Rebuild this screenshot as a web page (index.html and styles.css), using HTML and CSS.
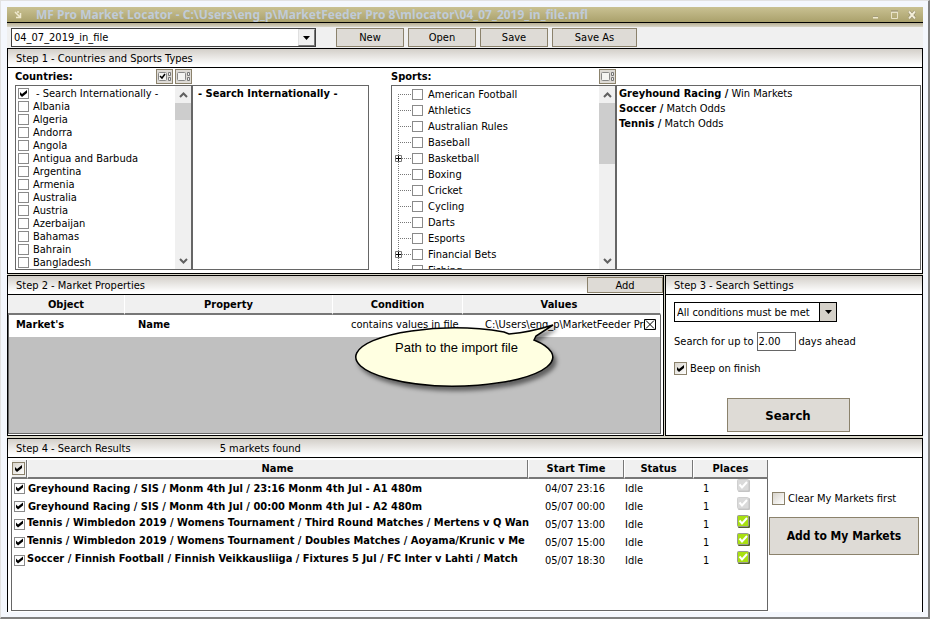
FILE: index.html
```html
<!DOCTYPE html>
<html lang="en">
<head>
    <meta charset="UTF-8">
    <meta name="viewport" content="width=device-width, initial-scale=1.0">
    <title>MF Pro Market Locator</title>
    <link rel="stylesheet" href="styles.css">
</head>
<body>

<!-- shared icons -->
<svg class="sprites" aria-hidden="true">
    <symbol id="up" viewBox="0 0 9 6"><path d="M1 5L4.500 1.500L8 5" fill="none" stroke="#606060" stroke-width="2"/></symbol>
    <symbol id="down" viewBox="0 0 9 6"><path d="M1 1L4.500 4.500L8 1" fill="none" stroke="#606060" stroke-width="2"/></symbol>
    <symbol id="drop" viewBox="0 0 7 4"><path d="M0 0H7L3.500 4Z" fill="#000"/></symbol>
    <symbol id="plus" viewBox="0 0 7 7"><path d="M.5 .5H6.500V6.500H.5Z" fill="#fff" stroke="#777"/><path d="M1 3.500H6M3.500 1V6" stroke="#000"/></symbol>
    <symbol id="none" viewBox="0 0 15 13">
        <rect x="1.500" y="2.500" width="8" height="8" rx="1" fill="#f4f4f2" stroke="#888"/>
        <path d="M11.500 2.500h2v3h-2zM11.500 7.500h2v3h-2z" fill="#eee" stroke="#777"/>
    </symbol>
    <symbol id="all" viewBox="0 0 15 13">
        <rect x="1.500" y="2.500" width="8" height="8" rx="1" fill="#f4f4f2" stroke="#888"/>
        <path d="M3 6l2 2 3-4" fill="none" stroke="#000" stroke-width="1.500"/>
        <path d="M11.500 2.500h2v3h-2zM11.500 7.500h2v3h-2z" fill="#eee" stroke="#777"/>
    </symbol>
    <symbol id="place" viewBox="0 0 13 13">
        <rect x="1" y="1" width="12" height="12" rx="1" fill="#53612c"/>
        <rect x=".5" y=".5" width="11" height="11" rx="1" fill="#a8e010" stroke="#9a9a92"/>
        <path d="M2.500 5.500L5 8.500L10 3" fill="none" stroke="#fff" stroke-width="2"/>
    </symbol>
    <symbol id="noplace" viewBox="0 0 13 13">
        <rect x="1" y="1" width="12" height="12" rx="1" fill="#c4c4c4"/>
        <rect x=".5" y=".5" width="11" height="11" rx="1" fill="#dadada" stroke="#d0d0d0"/>
        <path d="M2.500 5.500L5 8.500L10 3" fill="none" stroke="#fff" stroke-width="2"/>
    </symbol>
</svg>

<div class="window">
    <div class="titlebar">
        <svg class="app-icon" width="8" height="8" viewBox="0 0 8 8"><path d="M1 1L6 6M2 6.500H6.500V2M3 1H5" fill="none" stroke="#efe9cf" stroke-width="1.500"/></svg>
        <span class="title">MF Pro Market Locator - C:\Users\eng_p\MarketFeeder Pro 8\mlocator\04_07_2019_in_file.mfl</span>
        <svg class="win-icons" width="44" height="10" viewBox="0 0 44 10">
            <path d="M1 7.500H6" stroke="#f0ead0" stroke-width="2"/><path d="M1 6.500H6" stroke="#a39c7c"/>
            <path d="M19.500 1.500H25.500V8.500H19.500Z" fill="none" stroke="#e9e3c8"/><path d="M19 1H26" stroke="#8f876a" stroke-width="1"/><path d="M19 2.500H26" stroke="#e9e3c8"/>
            <path d="M37 1.500L43 8.500M43 1.500L37 8.500" stroke="#857d62" stroke-width="3"/><path d="M37 1.500L43 8.500M43 1.500L37 8.500" stroke="#f3eed8" stroke-width="2"/>
        </svg>
    </div>

    <div class="toolbar">
        <div class="combo combo-file">
            <select aria-label="Search file"><option>04_07_2019_in_file</option></select>
            <span class="combo-btn"><svg width="7" height="4"><use href="#drop"/></svg></span>
        </div>
        <button class="btn">New</button>
        <button class="btn">Open</button>
        <button class="btn">Save</button>
        <button class="btn btn-wide">Save As</button>
    </div>

    <div class="panel">
        <div class="panel-head">Step 1 - Countries and Sports Types</div>
        <div class="step1">
            <div class="group countries">
                <div class="group-head">
                    <b>Countries:</b>
                    <button class="icon-btn" aria-label="Select all"><svg width="15" height="13"><use href="#all"/></svg></button>
                    <button class="icon-btn" aria-label="Select none"><svg width="15" height="13"><use href="#none"/></svg></button>
                </div>
                <div class="list">
                    <div class="items">
                        <label class="country top"><input type="checkbox" checked>- Search Internationally -</label>
                        <label class="country"><input type="checkbox">Albania</label>
                        <label class="country"><input type="checkbox">Algeria</label>
                        <label class="country"><input type="checkbox">Andorra</label>
                        <label class="country"><input type="checkbox">Angola</label>
                        <label class="country"><input type="checkbox">Antigua and Barbuda</label>
                        <label class="country"><input type="checkbox">Argentina</label>
                        <label class="country"><input type="checkbox">Armenia</label>
                        <label class="country"><input type="checkbox">Australia</label>
                        <label class="country"><input type="checkbox">Austria</label>
                        <label class="country"><input type="checkbox">Azerbaijan</label>
                        <label class="country"><input type="checkbox">Bahamas</label>
                        <label class="country"><input type="checkbox">Bahrain</label>
                        <label class="country"><input type="checkbox">Bangladesh</label>
                    </div>
                    <div class="scroll">
                        <svg width="9" height="6"><use href="#up"/></svg>
                        <div class="thumb"></div>
                        <svg width="9" height="6"><use href="#down"/></svg>
                    </div>
                </div>
            </div>
            <div class="chosen chosen-countries"><b>- Search Internationally -</b></div>

            <div class="group sports">
                <div class="group-head">
                    <b>Sports:</b>
                    <button class="icon-btn" aria-label="Select none"><svg width="15" height="13"><use href="#none"/></svg></button>
                </div>
                <div class="list">
                    <div class="items">
                        <label class="sport"><span class="branch first"></span><input type="checkbox">American Football</label>
                        <label class="sport"><span class="branch"></span><input type="checkbox">Athletics</label>
                        <label class="sport"><span class="branch"></span><input type="checkbox">Australian Rules</label>
                        <label class="sport"><span class="branch"></span><input type="checkbox">Baseball</label>
                        <label class="sport"><span class="branch"><svg width="7" height="7"><use href="#plus"/></svg></span><input type="checkbox">Basketball</label>
                        <label class="sport"><span class="branch"></span><input type="checkbox">Boxing</label>
                        <label class="sport"><span class="branch"></span><input type="checkbox">Cricket</label>
                        <label class="sport"><span class="branch"></span><input type="checkbox">Cycling</label>
                        <label class="sport"><span class="branch"></span><input type="checkbox">Darts</label>
                        <label class="sport"><span class="branch"></span><input type="checkbox">Esports</label>
                        <label class="sport"><span class="branch"><svg width="7" height="7"><use href="#plus"/></svg></span><input type="checkbox">Financial Bets</label>
                        <label class="sport"><span class="branch"></span><input type="checkbox">Fishing</label>
                    </div>
                    <div class="scroll">
                        <svg width="9" height="6"><use href="#up"/></svg>
                        <div class="thumb thumb-long"></div>
                        <svg width="9" height="6"><use href="#down"/></svg>
                    </div>
                </div>
            </div>
            <div class="chosen chosen-sports">
                <div><b>Greyhound Racing /</b> Win Markets</div>
                <div><b>Soccer /</b> Match Odds</div>
                <div><b>Tennis /</b> Match Odds</div>
            </div>
        </div>
    </div>

    <div class="middle">
        <div class="panel step2">
            <div class="panel-head">Step 2 - Market Properties <button class="btn btn-add">Add</button></div>
            <table class="props">
                <colgroup><col class="c-object"><col class="c-property"><col class="c-condition"><col></colgroup>
                <thead>
                    <tr><th>Object</th><th>Property</th><th>Condition</th><th>Values</th></tr>
                </thead>
                <tbody>
                    <tr>
                        <td><b>Market's</b></td>
                        <td><b>Name</b></td>
                        <td>contains values in file</td>
                        <td>
                            <div class="value">
                                <span>C:\Users\eng_p\MarketFeeder Pro</span>
                                <button class="remove" aria-label="Remove"><svg width="12" height="11" viewBox="0 0 12 11"><path d="M.5 .5H11.500V10.500H.5Z" fill="#fff" stroke="#000"/><path d="M2 1.500L10 9.500M10 1.500L2 9.500" stroke="#000" stroke-width="1"/></svg></button>
                            </div>
                        </td>
                    </tr>
                </tbody>
            </table>
            <div class="props-rest"></div>
            <div class="callout">
                <svg width="210" height="80" viewBox="0 0 210 80">
                    <path d="M179 20A98.500 29 0 1 1 149 12L154 14Q176 12 198 5L181 16Z" fill="#ffffe1" stroke="#000" stroke-width="1.500"/>
                </svg>
                <div class="callout-text">Path to the import file</div>
            </div>
        </div>

        <div class="panel">
            <div class="panel-head">Step 3 - Search Settings</div>
            <div class="settings">
                <div class="combo combo-cond">
                    <select aria-label="Conditions"><option>All conditions must be met</option></select>
                    <span class="combo-btn"><svg width="7" height="4"><use href="#drop"/></svg></span>
                </div>
                <div class="days">
                    <label for="days">Search for up to</label>
                    <input type="text" id="days" value="2.00">
                    <span>days ahead</span>
                </div>
                <label class="option"><input type="checkbox" class="big" checked>Beep on finish</label>
                <button class="btn btn-search">Search</button>
            </div>
        </div>
    </div>

    <div class="panel step4">
        <div class="panel-head">Step 4 - Search Results <span class="found">5 markets found</span></div>
        <div class="results-wrap">
            <div class="results-box">
                <table class="results">
                    <colgroup><col class="r-check"><col><col class="r-over"><col class="r-start"><col class="r-status"><col class="r-count"><col class="r-icon"></colgroup>
                    <thead>
                        <tr>
                            <th><input type="checkbox" class="big" checked aria-label="All"></th>
                            <th>Name</th>
                            <th colspan="2">Start Time</th>
                            <th>Status</th>
                            <th colspan="2">Places</th>
                        </tr>
                    </thead>
                    <tbody>
                        <tr>
                            <td><input type="checkbox" checked aria-label="Market 1"></td>
                            <td class="name" colspan="2">Greyhound Racing / SIS / Monm 4th Jul / 23:16 Monm 4th Jul - A1 480m</td>
                            <td>04/07 23:16</td><td>Idle</td><td class="count">1</td>
                            <td class="mark"><svg width="13" height="13"><use href="#noplace"/></svg></td>
                        </tr>
                        <tr>
                            <td><input type="checkbox" checked aria-label="Market 2"></td>
                            <td class="name" colspan="2">Greyhound Racing / SIS / Monm 4th Jul / 00:00 Monm 4th Jul - A2 480m</td>
                            <td>05/07 00:00</td><td>Idle</td><td class="count">1</td>
                            <td class="mark"><svg width="13" height="13"><use href="#noplace"/></svg></td>
                        </tr>
                        <tr class="long">
                            <td><input type="checkbox" checked aria-label="Market 3"></td>
                            <td class="name" colspan="2">Tennis / Wimbledon 2019 / Womens Tournament / Third Round Matches / Mertens v Q Wan</td>
                            <td>05/07 13:00</td><td>Idle</td><td class="count">1</td>
                            <td class="mark"><svg width="13" height="13"><use href="#place"/></svg></td>
                        </tr>
                        <tr class="long">
                            <td><input type="checkbox" checked aria-label="Market 4"></td>
                            <td class="name" colspan="2">Tennis / Wimbledon 2019 / Womens Tournament / Doubles Matches / Aoyama/Krunic v Me</td>
                            <td>05/07 15:00</td><td>Idle</td><td class="count">1</td>
                            <td class="mark"><svg width="13" height="13"><use href="#place"/></svg></td>
                        </tr>
                        <tr class="long">
                            <td><input type="checkbox" checked aria-label="Market 5"></td>
                            <td class="name" colspan="2">Soccer / Finnish Football / Finnish Veikkausliiga / Fixtures 5 Jul / FC Inter v Lahti / Match</td>
                            <td>05/07 18:30</td><td>Idle</td><td class="count">1</td>
                            <td class="mark"><svg width="13" height="13"><use href="#place"/></svg></td>
                        </tr>
                    </tbody>
                </table>
                <div class="results-rest"></div>
            </div>
            <div class="actions">
                <label class="option"><input type="checkbox" class="big">Clear My Markets first</label>
                <button class="btn btn-markets">Add to My Markets</button>
            </div>
        </div>
    </div>
</div>

</body>
</html>
```
FILE: styles.css
```css
* {
    box-sizing: border-box;
}
body {
    margin: 0;
    background: #f4f7fd;
    color: #000;
    font: 11px/13px "DejaVu Sans Condensed", "DejaVu Sans", sans-serif;
}
button, select, input {
    font: inherit;
    color: inherit;
    margin: 0;
}
svg {
    display: block;
    flex: none;
}
.sprites {
    position: absolute;
    width: 0;
    height: 0;
}
.window {
    display: flex;
    flex-direction: column;
    min-height: 100vh;
    padding: 6px 5px 5px 6px;
    border: 1px solid #e2e2e2;
    border-right: 2px solid #808080;
    border-bottom: 2px solid #808080;
}

/* title bar */
.titlebar {
    display: flex;
    align-items: center;
    height: 16px;
    padding: 0 7px;
    background: linear-gradient(#c9c192, #aaa16c);
    border-bottom: 1px solid #000;
}
.title {
    flex: 1;
    margin-left: 14px;
    font: bold 12px/15px "Noto Sans", sans-serif;
    color: #c0cbd8;
    white-space: nowrap;
    overflow: hidden;
}

/* toolbar */
.toolbar {
    display: flex;
    align-items: center;
    gap: 4px;
    height: 25px;
    padding: 4px 4px 0;
    background: linear-gradient(#b5ad90, #d9d5c8 4px, #f0f0f0 4px);
}
.btn {
    width: 68px;
    height: 19px;
    padding: 0;
    background: #dedbd6;
    border: 1px solid #8b826c;
}
.btn-wide {
    width: 85px;
}
.combo {
    position: relative;
}
.combo select {
    display: block;
    width: 100%;
    height: 100%;
    padding: 0 2px;
    background: #fff;
    border: 1px solid #404040;
    border-radius: 0;
    appearance: none;
}
.combo-btn {
    position: absolute;
    top: 1px;
    right: 1px;
    bottom: 1px;
    display: flex;
    align-items: center;
    justify-content: center;
    width: 17px;
    background: #d5d1c9;
    border-left: 1px solid #000;
    pointer-events: none;
}
.combo-file {
    width: 305px;
    height: 19px;
    margin-right: 16px;
}
.combo-file .combo-btn {
    background: #f0f0f0;
    border: 1px solid #e0e0e0;
    border-right-color: #777;
    border-bottom-color: #777;
}
.combo-cond {
    width: 163px;
    height: 20px;
}
.combo-cond select {
    border-color: #000;
}

/* panels */
.panel {
    background: #fff;
    border: 1px solid #000;
}
.panel-head {
    display: flex;
    align-items: center;
    height: 19px;
    padding-left: 8px;
    background: linear-gradient(#d3cfc9, #fff 90%);
    border-bottom: 1px solid #000;
}

/* check boxes */
input[type="checkbox"] {
    flex: none;
    width: 11px;
    height: 11px;
    background: #fff;
    border: 1px solid #8a8a8a;
    appearance: none;
}
input[type="checkbox"].big {
    width: 13px;
    height: 13px;
    padding: 1px;
    background: linear-gradient(135deg, #d8d4cc, #fff);
    border-color: #8b826c;
}
input[type="checkbox"]:checked::after {
    content: "";
    display: block;
    width: 9px;
    height: 9px;
    background: #000;
    clip-path: polygon(1px 3px, 3px 5px, 8px 1px, 8px 4px, 3px 8px, 1px 6px);
}

/* step 1 */
.step1 {
    display: flex;
    align-items: flex-end;
    padding: 0 1px 3px 7px;
}
.group-head {
    display: flex;
    align-items: center;
    gap: 2px;
    height: 17px;
}
.group-head b {
    flex: 1;
}
.countries {
    width: 177px;
}
.sports {
    width: 225px;
    margin-left: 22px;
}
.icon-btn {
    width: 17px;
    height: 15px;
    padding: 0;
    background: #dedbd6;
    border: 1px solid #8b826c;
}
.list {
    display: flex;
    height: 185px;
    border: 1px solid #666;
    overflow: hidden;
}
.items {
    flex: 1;
}
.country {
    display: flex;
    align-items: center;
    gap: 4px;
    height: 13px;
    padding-left: 2px;
}
.countries .items {
    padding-top: 1px;
}
.country.top {
    gap: 7px;
}
.sport {
    display: flex;
    align-items: center;
    height: 16px;
}
.sport input[type="checkbox"] {
    margin-right: 5px;
}
.branch {
    display: flex;
    align-items: center;
    width: 14px;
    height: 16px;
    margin-left: 6px;
    background:
        repeating-linear-gradient(#777 0 1px, transparent 1px 2px) left bottom / 1px 100% no-repeat,
        repeating-linear-gradient(90deg, #777 0 1px, transparent 1px 2px) 0 8px / 14px 1px no-repeat;
}
.branch.first {
    background-size: 1px 50%, 14px 1px;
}
.branch svg {
    margin-left: -3px;
}
.scroll {
    display: flex;
    flex-direction: column;
    align-items: center;
    width: 16px;
    padding: 6px 0 5px;
    background: #f0f0f0;
}
.thumb {
    width: 100%;
    height: 17px;
    margin: 5px 0 auto;
    background: #cdcdcd;
}
.thumb-long {
    height: 61px;
}
.chosen {
    height: 185px;
    padding: 0 2px;
    line-height: 15px;
    border: 1px solid #666;
}
.chosen-countries {
    width: 177px;
    padding-left: 5px;
}
.chosen-sports {
    flex: 1;
}

/* steps 2 and 3 */
.middle {
    display: grid;
    grid-template-columns: 1fr 258px;
    gap: 1px;
    padding: 1px 0 2px;
    background: #d9d6c8;
}
.step2 {
    position: relative;
    display: flex;
    flex-direction: column;
    min-width: 0;
    padding-right: 2px;
}
.step2 .panel-head {
    margin-right: -2px;
}
.btn-add {
    width: 76px;
    height: 16px;
    margin-left: auto;
}
table {
    width: 100%;
    table-layout: fixed;
    border-collapse: separate;
    border-spacing: 0;
}
th, td {
    padding: 0;
    white-space: nowrap;
}
td {
    text-align: left;
    overflow: hidden;
}
.c-object {
    width: 117px;
}
.c-property {
    width: 208px;
}
.c-condition {
    width: 130px;
}
.props th {
    height: 20px;
    background: #f0f0f0;
    border-right: 1px solid #fff;
    border-bottom: 2px solid #777;
}
.props th:last-child {
    padding-right: 5px;
}
.props td {
    height: 22px;
    padding-bottom: 4px;
    background: #fff;
}
.props td:nth-child(1) {
    padding-left: 7px;
    border-left: 1px solid #666;
}
.props td:nth-child(2) {
    padding-left: 13px;
}
.props td:nth-child(3) {
    padding-left: 18px;
}
.props td:nth-child(4) {
    padding-left: 22px;
    border-right: 1px solid #666;
}
.value {
    display: flex;
    align-items: center;
    padding-right: 4px;
}
.value span {
    flex: 1;
    overflow: hidden;
}
.remove {
    padding: 0;
    background: none;
    border: none;
}
.props-rest {
    flex: 1;
    margin-bottom: 1px;
    background: #c0c0c0;
    border: 1px solid #666;
    border-top: none;
}
.callout {
    position: absolute;
    top: 44px;
    left: 347px;
}
.callout svg {
    filter: drop-shadow(3px 4px 2px rgba(0, 0, 0, 0.5));
}
.callout-text {
    position: absolute;
    top: 20px;
    left: 0;
    width: 203px;
    font: 13px/15px "Liberation Sans", sans-serif;
    text-align: center;
}
.settings {
    display: flex;
    flex-direction: column;
    gap: 10px;
    padding: 7px 20px 3px 8px;
}
.days {
    display: flex;
    align-items: center;
    gap: 3px;
}
.days input {
    width: 39px;
    height: 19px;
    padding: 0 1px;
    border: 1px solid #666;
}
.option {
    display: flex;
    align-items: center;
    gap: 3px;
    height: 15px;
}
.btn-search {
    align-self: center;
    width: 123px;
    height: 34px;
    margin-top: 12px;
    font-size: 13px;
    font-weight: bold;
}

/* step 4 */
.step4 {
    display: flex;
    flex: 1;
    flex-direction: column;
    border-bottom: none;
}
.found {
    margin-left: 89px;
}
.results-wrap {
    display: flex;
    flex: 1;
    padding: 2px 0 1px 3px;
}
.results-box {
    display: flex;
    flex: 1;
    flex-direction: column;
}
.r-check {
    width: 16px;
}
.r-over {
    width: 16px;
}
.r-start {
    width: 80px;
}
.r-status {
    width: 69px;
}
.r-count {
    width: 44px;
}
.r-icon {
    width: 31px;
}
.results th {
    height: 19px;
    background: #f0f0f0;
    border-left: 1px solid #fff;
    border-right: 1px solid #777;
    border-bottom: 2px solid #777;
}
.results th input[type="checkbox"], .results td input[type="checkbox"] {
    display: block;
}
.results td {
    height: 18px;
    padding-left: 1px;
}
.results td:first-child {
    padding-left: 2px;
    border-left: 1px solid #666;
}
.results td:last-child {
    border-right: 1px solid #666;
}
.results .name {
    font-weight: bold;
}
.results .long .name {
    padding-left: 0;
    padding-bottom: 3px;
}
.results .count {
    padding-left: 10px;
}
.results .mark {
    padding-left: 0;
    vertical-align: top;
}
.results-rest {
    flex: 1;
    border: 1px solid #666;
    border-top: none;
}
.actions {
    display: flex;
    flex-direction: column;
    gap: 11px;
    width: 154px;
    padding: 31px 3px 0 1px;
}
.actions .option {
    padding-left: 3px;
}
.btn-markets {
    width: 100%;
    height: 38px;
    font-size: 12px;
    font-weight: bold;
}
```
